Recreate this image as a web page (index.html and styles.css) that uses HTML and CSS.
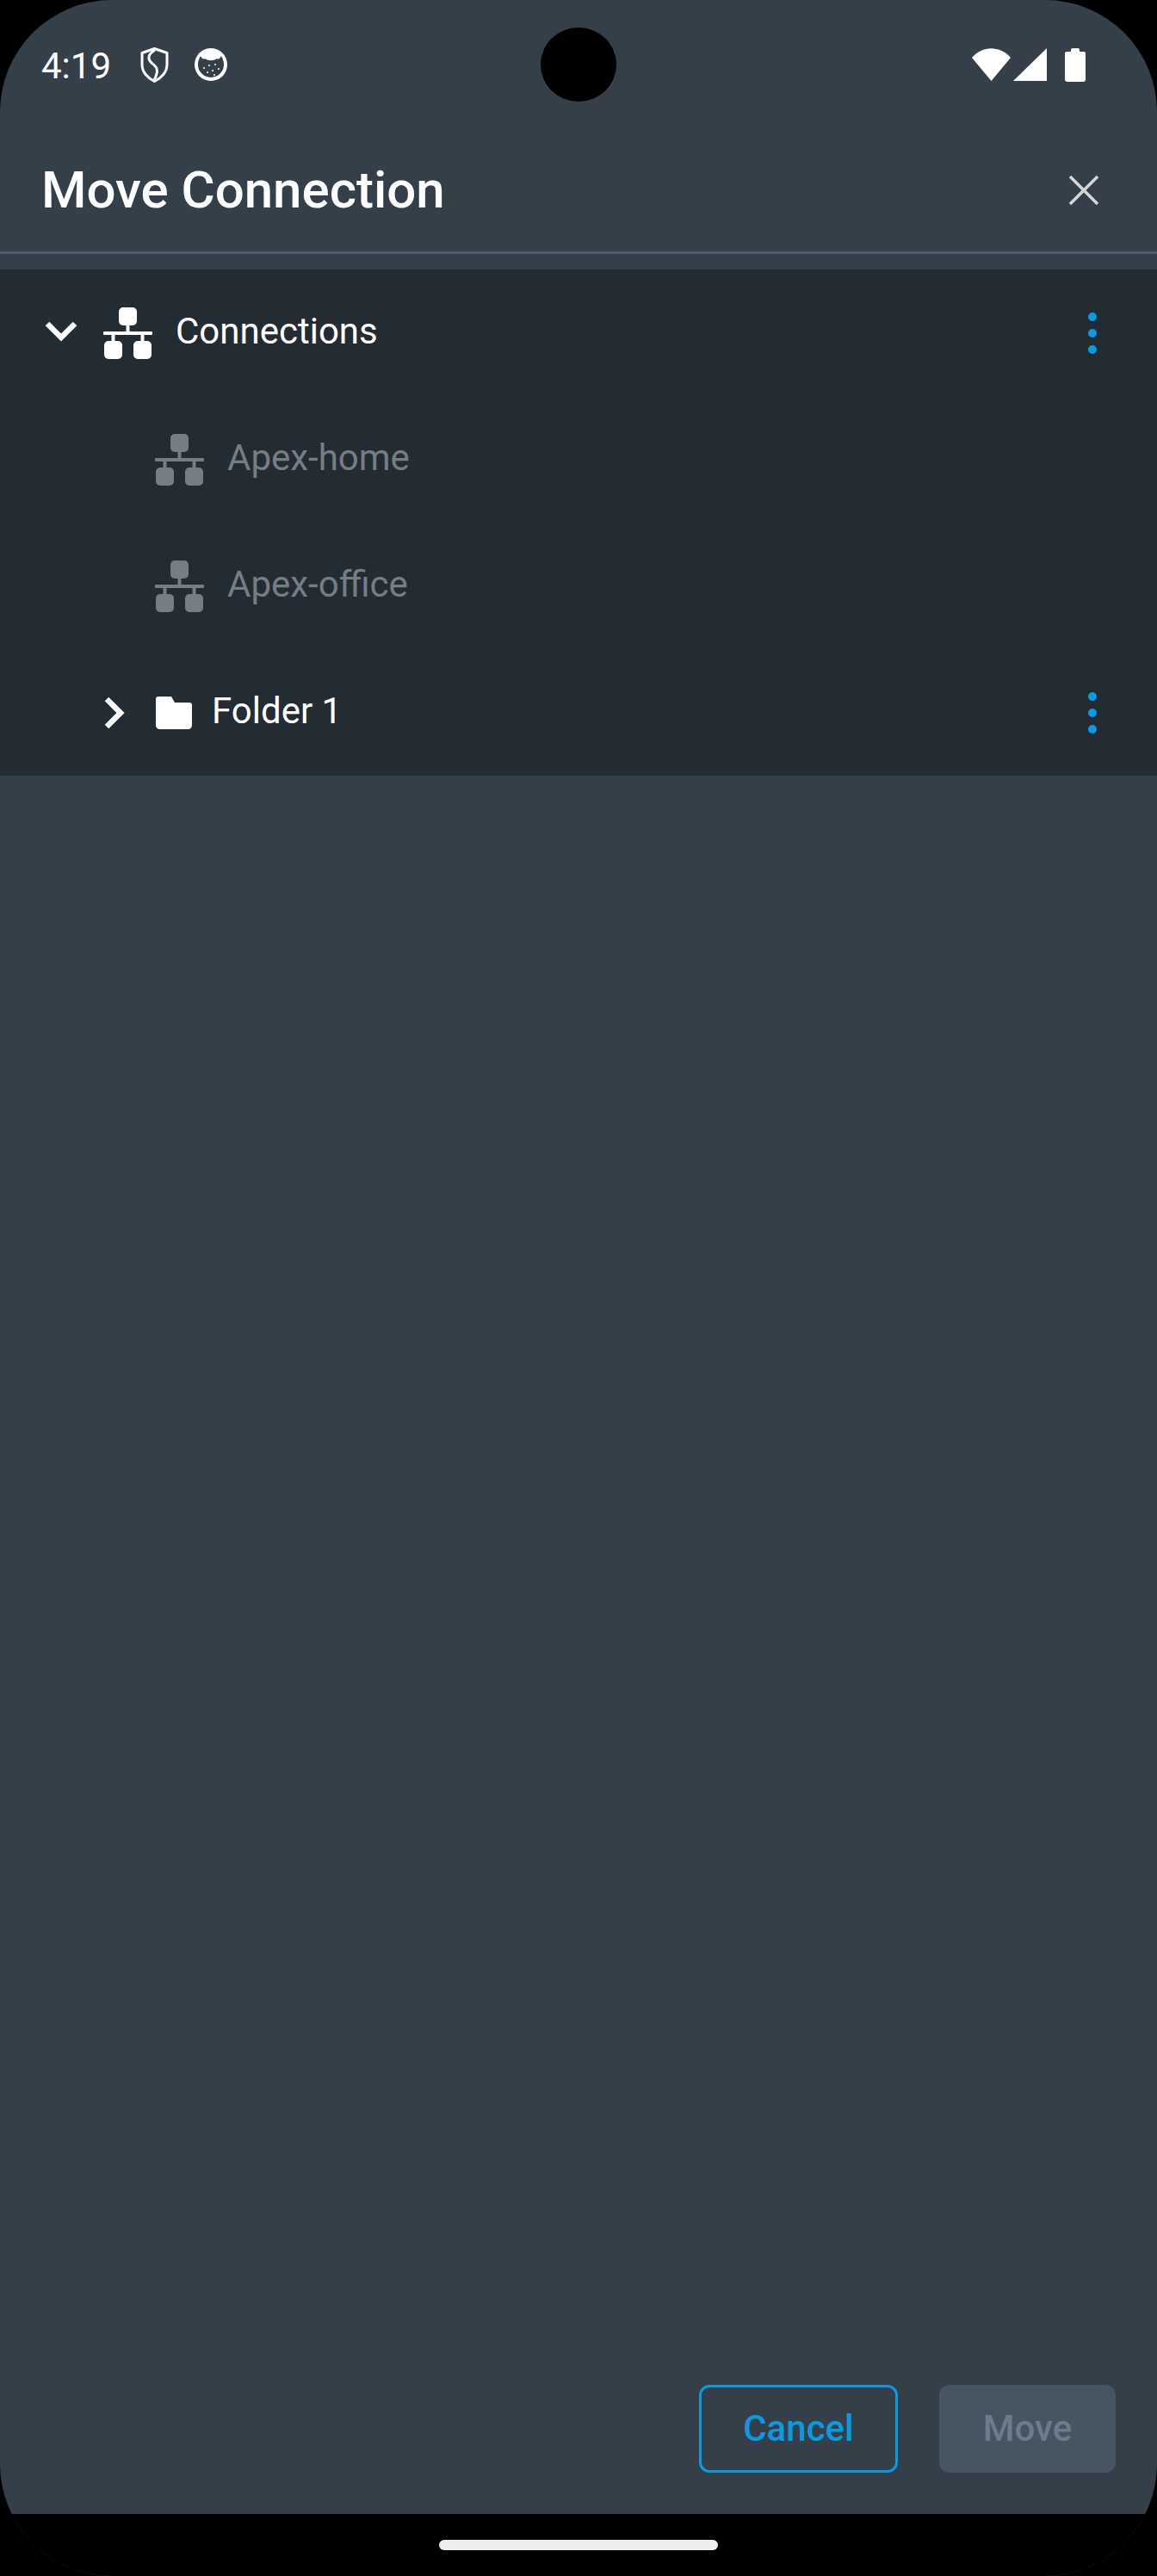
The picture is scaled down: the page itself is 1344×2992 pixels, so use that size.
FILE: index.html
```html
<!DOCTYPE html>
<html lang="en">
<head>
<meta charset="utf-8">
<title>Move Connection</title>
<link rel="stylesheet" href="styles.css">
</head>
<body>
<div class="screen">
  <div class="camera"></div>
  <div class="status">
    <span class="time">4:19</span>
    <svg class="ic-shield" viewBox="0 0 33 41"><path d="M16.500 1.500 L31 6.500 V20 C31 29 24 36 16.500 39.500 C9 36 2 29 2 20 V6.500 Z" fill="none" stroke="#fff" stroke-width="3" stroke-linejoin="round"/><path d="M17 3 C9 8 8 13 13 18 C18 22 23 25 16 38" fill="none" stroke="#fff" stroke-width="3"/></svg>
    <svg class="ic-cookie" viewBox="0 0 38 38"><circle cx="19" cy="19" r="19" fill="#fff"/><path d="M7 9 C9 13 11 13 12 12 C16 15 22 15 26 12 C27 13 29 13 31 9 C33 12 34 16 34 19 A15 15 0 0 1 4 19 C4 16 5 12 7 9 Z" fill="#353f4a"/><g fill="#fff"><circle cx="11" cy="23" r="1"/><circle cx="17" cy="20" r="1"/><circle cx="24" cy="19" r="1"/><circle cx="28" cy="24" r="1"/><circle cx="21" cy="26" r="1"/><circle cx="15" cy="28" r="1"/><circle cx="23" cy="31" r="1"/></g></svg>
    <span class="status-spacer"></span>
    <svg class="ic-wifi" viewBox="0 0 45 38"><path d="M0 11 C12 -3.500 33 -3.500 45 11 L22.500 38 Z" fill="#fff"/></svg>
    <svg class="ic-signal" viewBox="0 0 39 38"><path d="M39 0 V38 H0 Z" fill="#fff"/></svg>
    <svg class="ic-battery" viewBox="0 0 24 39"><path d="M7 2 Q7 0 9 0 H15 Q17 0 17 2 V4 H22 Q24 4 24 6 V36 Q24 39 21 39 H3 Q0 39 0 36 V6 Q0 4 2 4 H7 Z" fill="#fff"/></svg>
  </div>
  <header class="title-bar">
    <h1 class="title">Move Connection</h1>
    <svg class="ic-close" viewBox="0 0 36 36"><path d="M2 2 L34 34 M34 2 L2 34" stroke="#d6d6d6" stroke-width="3.500" fill="none"/></svg>
  </header>
  <div class="divider"></div>

  <section class="tree">
    <div class="row row-root">
      <svg class="chev-down" viewBox="0 0 38 24"><path d="M3 3 L19 19 L35 3" fill="none" stroke="#fff" stroke-width="6.500"/></svg>
      <svg class="ic-net" viewBox="0 0 57 60"><use href="#net"/></svg>
      <span class="label">Connections</span>
      <span class="kebab"><i></i><i></i><i></i></span>
    </div>
    <div class="row row-child muted">
      <svg class="ic-net" viewBox="0 0 57 60"><use href="#net"/></svg>
      <span class="label">Apex-home</span>
    </div>
    <div class="row row-child muted">
      <svg class="ic-net" viewBox="0 0 57 60"><use href="#net"/></svg>
      <span class="label">Apex-office</span>
    </div>
    <div class="row row-folder">
      <svg class="chev-right" viewBox="0 0 24 38"><path d="M3 3 L19 19 L3 35" fill="none" stroke="#fff" stroke-width="6.500"/></svg>
      <svg class="ic-folder" viewBox="0 0 42 38"><path d="M0 3 Q0 0 3 0 H18 L22 7 H39 Q42 7 42 10 V33 Q42 38 37 38 H5 Q0 38 0 33 Z" fill="#fff"/></svg>
      <span class="label">Folder 1</span>
      <span class="kebab"><i></i><i></i><i></i></span>
    </div>
  </section>

  <footer class="actions">
    <button class="btn btn-outline" type="button">Cancel</button>
    <button class="btn btn-disabled" type="button">Move</button>
  </footer>
  <div class="navbar"><span class="pill"></span></div>
</div>

<svg class="defs" width="0" height="0">
  <defs>
    <g id="net" fill="currentColor">
      <rect x="18" y="0" width="21" height="21" rx="5"/>
      <rect x="26.500" y="20" width="4" height="9"/>
      <rect x="0" y="28" width="57" height="4" rx="1"/>
      <rect x="9.500" y="31" width="4" height="9"/>
      <rect x="43.500" y="31" width="4" height="9"/>
      <rect x="1" y="39" width="21" height="21" rx="5"/>
      <rect x="35" y="39" width="21" height="21" rx="5"/>
    </g>
  </defs>
</svg>
</body>
</html>
```
FILE: styles.css
```css
* { box-sizing: border-box; }
html, body { margin: 0; padding: 0; background: #000; }
body { width: 1344px; height: 2992px; overflow: hidden; font-family: Roboto, "Noto Sans", sans-serif; }
.defs { position: absolute; }

.screen {
  position: relative;
  width: 1344px;
  height: 2992px;
  background: #353f4a;
  border-radius: 130px;
  overflow: hidden;
  display: flex;
  flex-direction: column;
  color: #fff;
}
.camera {
  position: absolute;
  left: 628px;
  top: 32px;
  width: 88px;
  height: 86px;
  border-radius: 50%;
  background: #000;
}

.status {
  height: 150px;
  display: flex;
  align-items: center;
  padding: 0 83px 0 48px;
  flex: none;
}
.time { font-size: 42px; line-height: 1; width: 115px; padding-top: 4px; }
.ic-shield { width: 33px; height: 41px; margin-right: 30px; }
.ic-cookie { width: 38px; height: 38px; }
.status-spacer { flex: 1; }
.ic-wifi { width: 45px; height: 38px; margin-right: 3px; }
.ic-signal { width: 39px; height: 38px; margin-right: 21px; }
.ic-battery { width: 24px; height: 39px; }

.title-bar {
  height: 142px;
  flex: none;
  display: flex;
  align-items: center;
  justify-content: space-between;
  padding: 0 67px 0 48px;
}
.title { margin: 0; font-size: 60px; font-weight: 500; line-height: 1; }
.ic-close { width: 36px; height: 36px; }

.divider { height: 3px; background: #4e5d6c; flex: none; margin-bottom: 18px; }

.tree { background: #232b33; flex: none; }
.row {
  height: 147px;
  display: flex;
  align-items: center;
  font-size: 42px;
  color: #fff;
  padding-right: 70px;
}
.row-root { padding-left: 52px; }
.row-child { padding-left: 180px; }
.row-folder { padding-left: 121px; }
.muted { color: #767d85; }
.label { line-height: 1; margin-bottom: 3px; margin-left: -1px; }
.chev-down { width: 38px; height: 24px; margin-right: 30px; margin-bottom: 4px; }
.chev-right { width: 24px; height: 38px; margin-right: 36px; }
.ic-net { width: 57px; height: 60px; margin-right: 28px; color: inherit; }
.ic-folder { width: 42px; height: 38px; margin-right: 24px; }
.kebab {
  margin-left: auto;
  display: flex;
  flex-direction: column;
  gap: 9px;
}
.kebab i { display: block; width: 10px; height: 10px; border-radius: 50%; background: #0a9ae6; }

.actions {
  margin-top: auto;
  display: flex;
  justify-content: flex-end;
  gap: 48px;
  padding: 0 48px 120px 0;
}
.btn {
  height: 102px;
  border-radius: 12px;
  font-family: Roboto, sans-serif;
  font-size: 42px;
  font-weight: 500;
  padding: 0 0 2px;
}
.btn-outline { width: 231px; background: transparent; border: 3px solid #0a9ae0; color: #0a9ae0; }
.btn-disabled { width: 205px; background: #475562; border: 0; color: #6b7c8c; }

.navbar {
  position: absolute;
  left: 0;
  right: 0;
  bottom: 0;
  height: 72px;
  background: #000;
  display: flex;
  justify-content: center;
  padding-top: 30px;
}
.pill { width: 324px; height: 12px; border-radius: 6px; background: #eee; }
```
